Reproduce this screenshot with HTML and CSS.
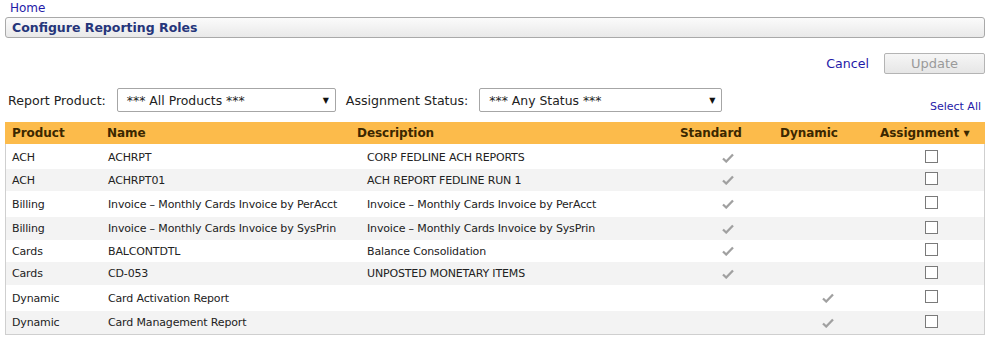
FILE: index.html
```html
<!DOCTYPE html>
<html lang="en">
<head>
  <meta charset="UTF-8" />
  <title>Configure Reporting Roles</title>
  <link rel="stylesheet" href="styles.css">
</head>
<body>
  <div class="page">
    <a class="crumb" href="#">Home</a>
    <div class="title-bar">Configure Reporting Roles</div>

    <div class="actions">
      <a class="link" href="#">Cancel</a>
      <button class="btn" disabled>Update</button>
    </div>

    <div class="filters">
      <label class="first">Report Product:</label>
      <div class="select product-select"><span>*** All Products ***</span><span class="arrow">&#9660;</span></div>
      <label>Assignment Status:</label>
      <div class="select status-select"><span>*** Any Status ***</span><span class="arrow">&#9660;</span></div>
      <a class="select-all" href="#">Select All</a>
    </div>

    <div class="grid">
      <div class="row head">
        <div class="c-prod">Product</div>
        <div class="c-name">Name</div>
        <div class="c-desc">Description</div>
        <div class="c-flag">Standard</div>
        <div class="c-flag">Dynamic</div>
        <div class="c-flag">Assignment <span class="caret">&#9660;</span></div>
      </div>
      <div id="rows"></div>
    </div>
  </div>

  <script>
    const reports = [
      ['ACH', 'ACHRPT', 'CORP FEDLINE ACH REPORTS', 'std', 23],
      ['ACH', 'ACHRPT01', 'ACH REPORT FEDLINE RUN 1', 'std', 22],
      ['Billing', 'Invoice \u2013 Monthly Cards Invoice by PerAcct', 'Invoice \u2013 Monthly Cards Invoice by PerAcct', 'std', 26],
      ['Billing', 'Invoice \u2013 Monthly Cards Invoice by SysPrin', 'Invoice \u2013 Monthly Cards Invoice by SysPrin', 'std', 23],
      ['Cards', 'BALCONTDTL', 'Balance Consolidation', 'std', 22],
      ['Cards', 'CD-053', 'UNPOSTED MONETARY ITEMS', 'std', 23],
      ['Dynamic', 'Card Activation Report', '', 'dyn', 26],
      ['Dynamic', 'Card Management Report', '', 'dyn', 23]
    ];

    const check = '<svg class="tick" width="12" height="10" viewBox="0 0 12 10"><path d="M1 5.5 L4.2 8.5 L11 1.5" fill="none" stroke="#a0a0a0" stroke-width="2.3"/></svg>';
    const rows = document.getElementById('rows');

    reports.forEach((r, i) => {
      const row = document.createElement('div');
      row.className = 'row' + (i % 2 ? ' alt' : '');
      row.style.height = r[4] + 'px';
      row.innerHTML =
        `<div class="c-prod">${r[0]}</div>` +
        `<div class="c-name">${r[1]}</div>` +
        `<div class="c-desc data">${r[2]}</div>` +
        `<div class="c-mark">${r[3] === 'std' ? check : ''}</div>` +
        `<div class="c-mark">${r[3] === 'dyn' ? check : ''}</div>` +
        `<div class="c-mark"><span class="box"></span></div>`;
      rows.appendChild(row);
    });
  </script>
</body>
</html>
```

FILE: styles.css
```css
body {
  font-family: 'DejaVu Sans', Verdana, sans-serif;
  font-size: 11px;
  color: #222;
  background: #fff;
  margin: 0;
}
.page {
  padding: 0 4px 0 5px;
}
a {
  text-decoration: none;
}
.crumb {
  display: block;
  color: #1f1aa8;
  font-size: 12px;
  line-height: 17px;
  padding: 0 0 0 5px;
}
.title-bar {
  height: 19px;
  line-height: 19px;
  border: 1px solid #a9a9a9;
  border-radius: 3px;
  background: linear-gradient(#fbfbfb, #e9e9e9);
  color: #25357a;
  font-weight: bold;
  font-size: 12.5px;
  padding-left: 6px;
}
.actions {
  display: flex;
  justify-content: flex-end;
  align-items: center;
  gap: 15px;
  margin-top: 15px;
}
.link {
  color: #1f1aa8;
  font-size: 12.6px;
}
.btn {
  width: 101px;
  height: 21px;
  border: 1px solid #b4b4b4;
  border-radius: 2px;
  background: linear-gradient(#f6f6f6, #e6e6e6);
  color: #9a9a9a;
  font-family: inherit;
  font-size: 13px;
  padding: 0;
}
.filters {
  display: flex;
  align-items: center;
  margin-top: 14px;
  height: 24px;
}
.filters label {
  font-size: 12.6px;
  margin-right: 11px;
}
.filters label.first {
  padding-left: 3px;
}
.select {
  display: flex;
  justify-content: space-between;
  align-items: center;
  height: 24px;
  border: 1px solid #a6a6a6;
  border-radius: 2px;
  padding: 0 6px 0 9px;
  box-sizing: border-box;
  font-size: 12.4px;
  margin-right: 10px;
}
.select .arrow {
  font-size: 8px;
  color: #111;
}
.product-select {
  width: 219px;
}
.status-select {
  width: 243px;
}
.select-all {
  margin-left: auto;
  align-self: flex-end;
  color: #1f1aa8;
  font-size: 11px;
  margin-right: 4px;
  margin-bottom: -1px;
}
.grid {
  margin-top: 10px;
  border: 1px solid #cfcfcf;
  border-top: none;
  width: 980px;
  box-sizing: border-box;
}
.row {
  display: grid;
  grid-template-columns: 96px 250px 326px 100px 100px 1fr;
  align-items: center;
  letter-spacing: -0.15px;
}
.row.alt {
  background: #f3f3f3;
}
.row.head {
  height: 22px;
  background: #fcbb4b;
  color: #3b2700;
  font-size: 12px;
  font-weight: bold;
  letter-spacing: -0.05px;
  margin: 0 -1px 2px;
}
.c-prod {
  padding-left: 6px;
}
.head .c-prod {
  padding-left: 7px;
}
.c-name, .c-desc {
  padding-left: 6px;
}
.c-desc.data {
  padding-left: 15px;
}
.c-flag {
  padding-left: 3px;
}
.caret {
  font-size: 8px;
  vertical-align: 1px;
}
.c-mark {
  display: flex;
  justify-content: center;
}
.box {
  width: 11px;
  height: 11px;
  border: 1px solid #7a7a7a;
  background: #fff;
  margin-top: -3px;
}
.tick {
  display: block;
}
```
